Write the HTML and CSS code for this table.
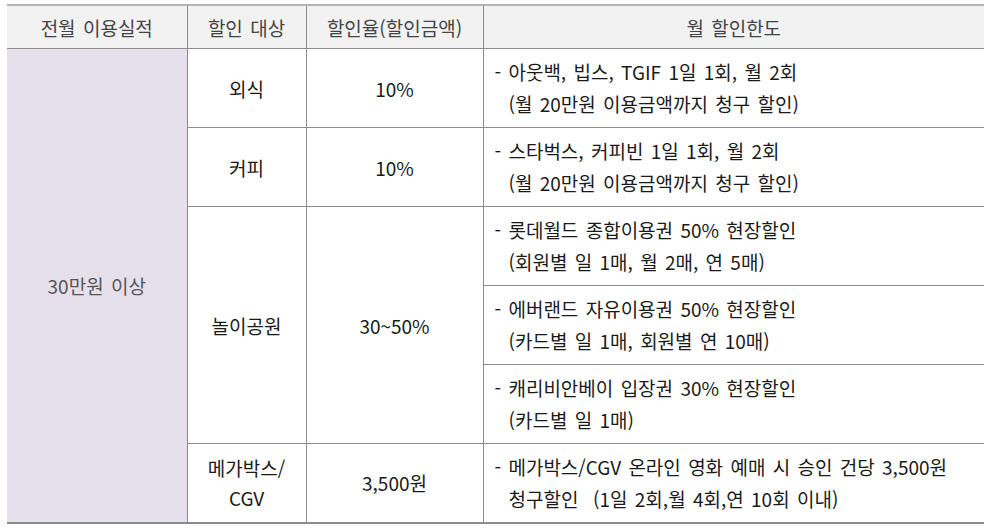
FILE: index.html
```html
<!DOCTYPE html>
<html lang="ko">
<head>
<meta charset="utf-8">
<link rel="stylesheet" href="styles.css">
</head>
<body>
<table class="bene">
  <colgroup>
    <col class="c1"><col class="c2"><col class="c3"><col class="c4">
  </colgroup>
  <thead>
    <tr>
      <th>전월 이용실적</th>
      <th>할인 대상</th>
      <th>할인율(할인금액)</th>
      <th>월 할인한도</th>
    </tr>
  </thead>
  <tbody>
    <tr>
      <td class="tier" rowspan="6">30만원 이상</td>
      <td class="ctr">외식</td>
      <td class="ctr">10%</td>
      <td class="desc"><div>- 아웃백, 빕스, TGIF 1일 1회, 월 2회</div><div class="sub">(월 20만원 이용금액까지 청구 할인)</div></td>
    </tr>
    <tr>
      <td class="ctr">커피</td>
      <td class="ctr">10%</td>
      <td class="desc"><div>- 스타벅스, 커피빈 1일 1회, 월 2회</div><div class="sub">(월 20만원 이용금액까지 청구 할인)</div></td>
    </tr>
    <tr>
      <td class="ctr" rowspan="3">놀이공원</td>
      <td class="ctr" rowspan="3">30~50%</td>
      <td class="desc"><div>- 롯데월드 종합이용권 50% 현장할인</div><div class="sub">(회원별 일 1매, 월 2매, 연 5매)</div></td>
    </tr>
    <tr>
      <td class="desc"><div>- 에버랜드 자유이용권 50% 현장할인</div><div class="sub">(카드별 일 1매, 회원별 연 10매)</div></td>
    </tr>
    <tr>
      <td class="desc"><div>- 캐리비안베이 입장권 30% 현장할인</div><div class="sub">(카드별 일 1매)</div></td>
    </tr>
    <tr>
      <td class="ctr two">메가박스/<br>CGV</td>
      <td class="ctr">3,500원</td>
      <td class="desc"><div>- 메가박스/CGV 온라인 영화 예매 시 승인 건당 3,500원</div><div class="sub">청구할인 &nbsp;(1일 2회,월 4회,연 10회 이내)</div></td>
    </tr>
  </tbody>
</table>
</body>
</html>
```
FILE: styles.css
```css
html, body {
  margin: 0;
  padding: 0;
  background: #ffffff;
}
body {
  padding: 4px 0 0 7px;
  font-family: "Noto Sans CJK KR", "Noto Sans", sans-serif;
  font-size: 19px;
  color: #1a1a1a;
}
.bene {
  border-collapse: collapse;
  table-layout: fixed;
  width: 977px;
  border-top: 2px solid #b4b4b4;
  border-bottom: 2px solid #8c8c8c;
  word-spacing: 2px;
}
.c1 { width: 180px; }
.c2 { width: 119px; }
.c3 { width: 177px; }
.c4 { width: 501px; }
.bene th, .bene td {
  border: 1px solid #8c8c8c;
  padding: 0;
  vertical-align: middle;
}
.bene tr > :first-child { border-left: none; }
.bene tr > :last-child { border-right: none; }
.bene td.tier { border-left: none; }
.bene th {
  background: #f2f2f2;
  font-weight: normal;
  color: #444444;
  height: 42px;
  font-size: 19px;
}
.bene tbody tr { height: 79px; }
.tier {
  background: #e5e0ec;
  color: #555555;
  text-align: center;
}
.ctr {
  text-align: center;
}
.two {
  line-height: 30px;
}
.desc {
  padding-left: 11px !important;
  line-height: 32px;
}
.sub {
  padding-left: 14px;
}
```
